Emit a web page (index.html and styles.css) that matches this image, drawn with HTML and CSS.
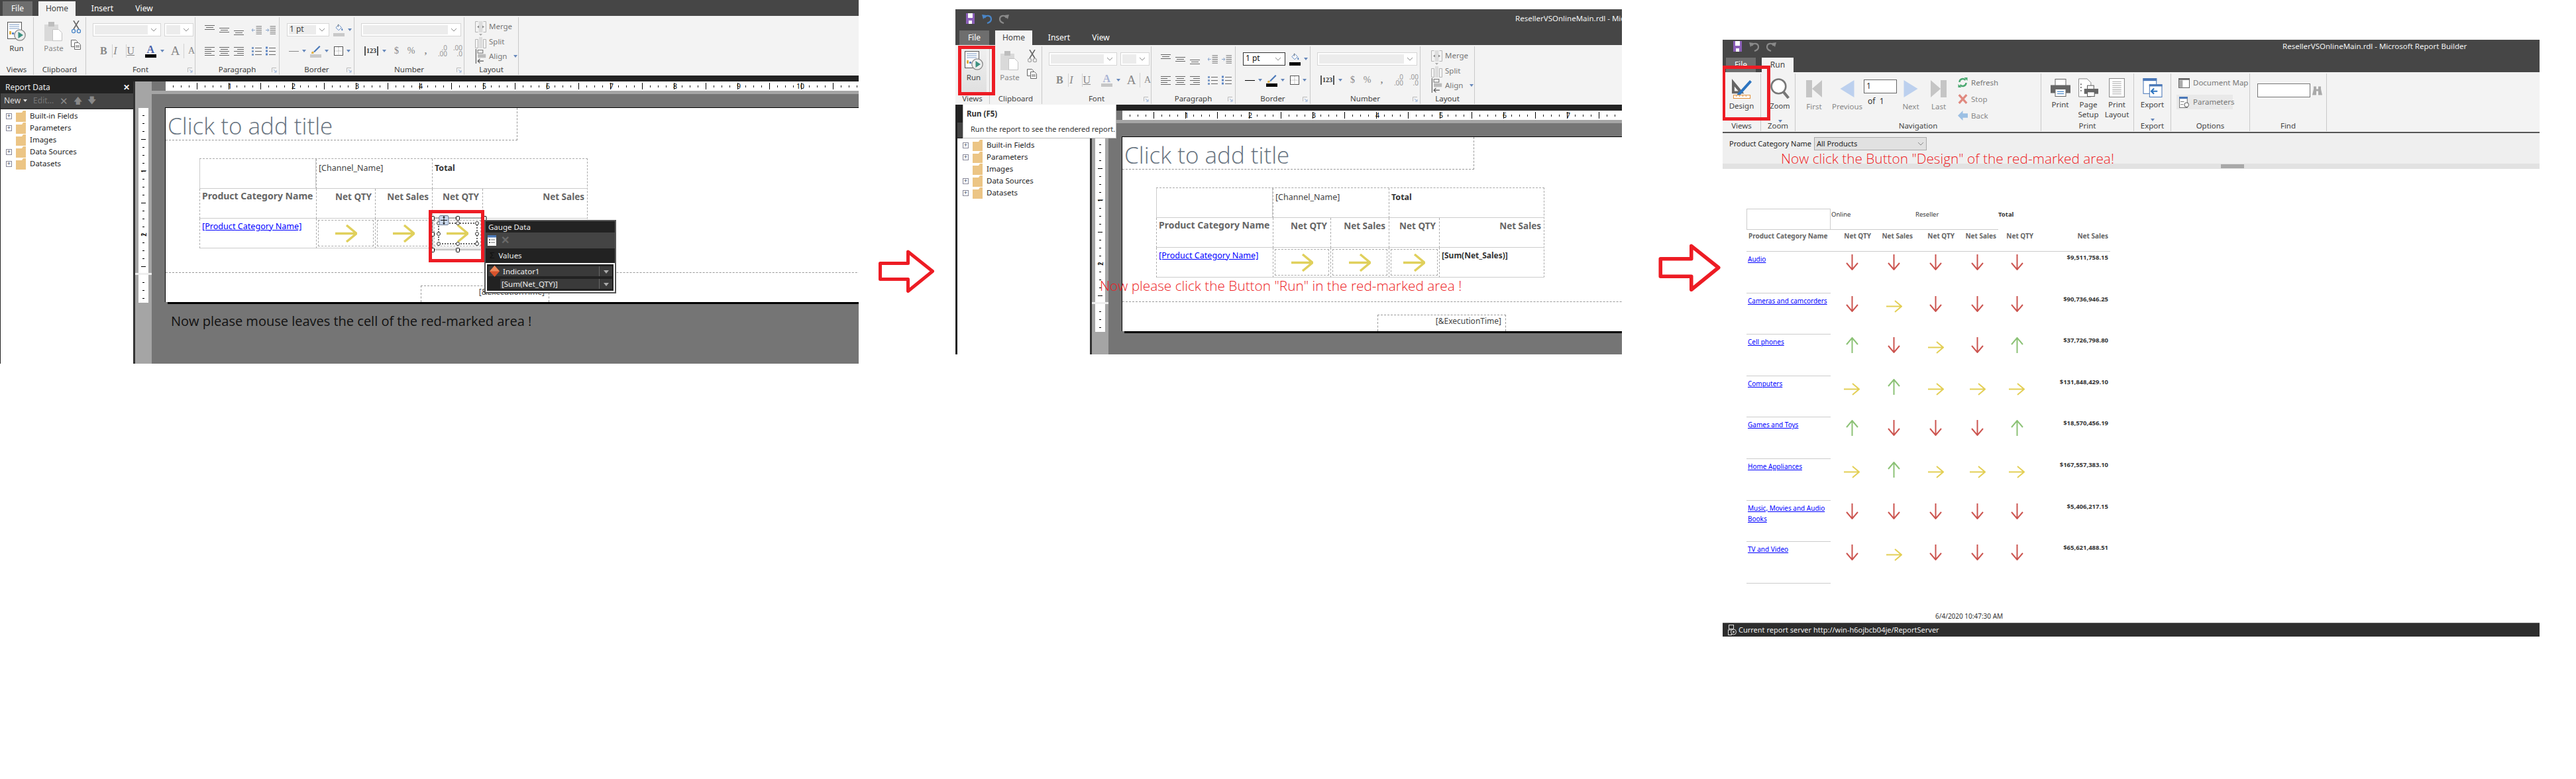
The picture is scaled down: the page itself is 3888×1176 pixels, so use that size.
FILE: index.html
```html
<!DOCTYPE html>
<html lang="en">
<head>
<meta charset="utf-8">
<title>Report Builder walkthrough</title>
<link rel="stylesheet" href="styles.css">
</head>
<body>
<svg class="sprite" aria-hidden="true">
  <symbol id="run" viewBox="0 0 28 29"><rect x=".5" y=".5" width="21" height="25" fill="#fff" stroke="#555"/><path d="M3 4h15M3 7h15M3 10h15" stroke="#7d9cc8"/><path d="M3 14h3v5H3z" fill="#e0b040"/><path d="M7 16h3v3H7z" fill="#5b84c4"/><circle cx="19" cy="20" r="8.2" fill="#eee" stroke="#888" stroke-width="1.3"/><path d="M16.5 15l7.5 5-7.5 5z" fill="#3c9080"/></symbol>
  <symbol id="paste" viewBox="0 0 28 29"><rect x="0" y="4" width="21" height="25" fill="#d9d9d9"/><rect x="6" y="0" width="9" height="7" fill="#bdbdbd"/><path d="M12.5 11.5h9l5 5v12h-14z" fill="#fff" stroke="#c4c4c4"/></symbol>
  <symbol id="cut" viewBox="0 0 14 20"><path d="M3 0l8 13M11 0L3 13" stroke="#666" stroke-width="1.6" fill="none"/><circle cx="3" cy="16" r="2.6" fill="none" stroke="currentColor" stroke-width="1.4"/><circle cx="11" cy="16" r="2.6" fill="none" stroke="currentColor" stroke-width="1.4"/></symbol>
  <symbol id="copy" viewBox="0 0 15 15"><path d="M.5.5h7l2 2v8H.5z" fill="#fff" stroke="currentColor"/><path d="M5.5 4.5h6l3 3v7h-9z" fill="#fff" stroke="currentColor"/><path d="M7 9h6M7 11h6" stroke="currentColor"/></symbol>
  <symbol id="al-top" viewBox="0 0 15 15"><path d="M0 .5h15M2 3.5h11M0 6.5h15" stroke="#666"/></symbol>
  <symbol id="al-mid" viewBox="0 0 15 15"><path d="M0 4.5h15M2 7.5h11M0 10.5h15" stroke="#666"/></symbol>
  <symbol id="al-bot" viewBox="0 0 15 15"><path d="M0 8.5h15M2 11.5h11M0 14.5h15" stroke="#666"/></symbol>
  <symbol id="ind-l" viewBox="0 0 16 15"><path d="M7 1.500h9M7 4.500h9M7 7.500h9M7 10.500h9M7 13.500h9" stroke="#666"/><path d="M5 7.500H0m2-2.500L0 7.500 2 10" stroke="#7d9cc8" fill="none"/></symbol>
  <symbol id="ind-r" viewBox="0 0 16 15"><path d="M7 1.500h9M7 4.500h9M7 7.500h9M7 10.500h9M7 13.500h9" stroke="#666"/><path d="M0 7.500h5m-2-2.500 2 2.500L3 10" stroke="#7d9cc8" fill="none"/></symbol>
  <symbol id="tx-l" viewBox="0 0 15 15"><path d="M0 1.500h15M0 4.500h10M0 7.500h15M0 10.500h10M0 13.500h15" stroke="#666"/></symbol>
  <symbol id="tx-c" viewBox="0 0 15 15"><path d="M0 1.500h15M2 4.500h11M0 7.500h15M2 10.500h11M0 13.500h15" stroke="#666"/></symbol>
  <symbol id="tx-r" viewBox="0 0 15 15"><path d="M0 1.500h15M5 4.500h10M0 7.500h15M5 10.500h10M0 13.500h15" stroke="#666"/></symbol>
  <symbol id="bul" viewBox="0 0 15 15"><path d="M5 2.500h10M5 7.500h10M5 12.500h10" stroke="#666"/><path d="M0 1h3v3H0zM0 6h3v3H0zM0 11h3v3H0z" fill="#7d9cc8"/></symbol>
  <symbol id="num" viewBox="0 0 15 15"><path d="M5 2.500h10M5 7.500h10M5 12.500h10" stroke="#666"/><path d="M0 .5h3v3H0zM0 5.500h3v3H0zM0 10.500h3v3H0z" fill="#5b84c4"/></symbol>
  <symbol id="fill" viewBox="0 0 19 20"><path d="M3 8l6-6 6 6-6 6z" fill="#fff" stroke="#4a78b8" stroke-width="1.300"/><path d="M8 1v6" stroke="#444"/><path d="M16 9c1 2 2 3 2 4a1.500 1.500 0 0 1-3 0c0-1 0-2 1-4z" fill="#4a78b8"/></symbol>
  <symbol id="pen" viewBox="0 0 16 14"><path d="M5 10L14 1l1.500 1.500L7 11z" fill="#4a78b8"/><path d="M2 13c0-3 1-4 3-3 1 1 1 2 0 3z" fill="#e0b040"/></symbol>
  <symbol id="bdr" viewBox="0 0 14 14"><rect x=".5" y=".5" width="13" height="13" fill="#fff" stroke="#555"/><path d="M7 1v12M1 7h12" stroke="#999" stroke-dasharray="1 1"/></symbol>
  <symbol id="merge" viewBox="0 0 17 17"><path d="M4.500.5h-4v16h4M12.500.5h4v16h-4" fill="none" stroke="#b5b5b5"/><rect x="5.500" y="0" width="6" height="17" fill="#ddd"/><path d="M3 8.500l3-2v4zM14 8.500l-3-2v4z" fill="#888"/></symbol>
  <symbol id="split" viewBox="0 0 17 22"><path d="M.5 8.500h4v13h-4zM12.500 8.500h4v13h-4z" fill="none" stroke="#b5b5b5"/><rect x="6" y="5" width="5" height="17" fill="#ddd"/><path d="M6 0h5L8.500 3z" fill="#aaa"/></symbol>
  <symbol id="align" viewBox="0 0 14 20"><path d="M.5 0v20" stroke="#555"/><rect x="3" y="1.500" width="7" height="4" fill="#fff" stroke="#777"/><rect x="3" y="7" width="11" height="5" fill="#bbb"/><path d="M11 16.500H3m3-3l-3 3 3 3" fill="none" stroke="#555"/></symbol>
  <symbol id="launch" viewBox="0 0 8 8"><path d="M.5 7V.5H7" fill="none" stroke="#bbb"/><path d="M3 3l4 4M7 4v3H4" fill="none" stroke="#8eacd8"/></symbol>
  <symbol id="chev" viewBox="0 0 10 6"><path d="M1 1l4 4 4-4" fill="none" stroke="#8a8a8a"/></symbol>
  <symbol id="folder" viewBox="0 0 15 17"><path d="M0 3h9l2-3h4v17H0z" fill="#ecc585"/></symbol>
  <symbol id="gem" viewBox="0 0 15 17"><path d="M7.500 0L15 8.500 7.500 17 0 8.500z" fill="#d9532c"/><path d="M7.500 0L0 8.500h15z" fill="#ee8a5c"/></symbol>
  <symbol id="tbl" viewBox="0 0 13 16"><rect width="13" height="16" fill="#fff"/><rect width="13" height="3.500" fill="#4a78b8"/><path d="M5 7h6M5 11h6" stroke="#666"/><path d="M2 6h2v2H2zM2 10h2v2H2z" fill="#666"/></symbol>
  <symbol id="ar-r" viewBox="0 0 33 27"><path d="M0 13.500h31M17 1l15 12.500L17 26" fill="none" stroke="#e0d05c" stroke-width="3.400"/></symbol>
  <symbol id="rp-r" viewBox="0 0 24 19"><path d="M0 9.500h22M13 1l10 8.500L13 18" fill="none" stroke="#e3cf55" stroke-width="2"/></symbol>
  <symbol id="rp-d" viewBox="0 0 19 24"><path d="M9.500 0v22M1 13l8.500 10L18 13" fill="none" stroke="#cc5550" stroke-width="2"/></symbol>
  <symbol id="rp-u" viewBox="0 0 19 24"><path d="M9.500 24V2M1 11l8.500-10L18 11" fill="none" stroke="#8cc276" stroke-width="2"/></symbol>
  <symbol id="big" viewBox="0 0 84 65"><path d="M2.500 20.500h42V3l37 29.500-37 30V44.500h-42z" fill="#fff" stroke="#ed1c24" stroke-width="5" stroke-linejoin="round"/></symbol>
  <symbol id="design" viewBox="0 0 32 32"><path fill-rule="evenodd" d="M1 1l19 23H1zM5 13v7h6z" fill="#666"/><path d="M10 24L29 3l3 3-18 20-6 2z" fill="#2c74c0"/><rect x="3.500" y="26.500" width="26" height="5" fill="#fff" stroke="#e08a30"/><path d="M8 27v2M13 27v2M18 27v2M23 27v2" stroke="#e08a30"/></symbol>
  <symbol id="zoom" viewBox="0 0 28 30"><circle cx="12" cy="12" r="10.500" fill="#fff" stroke="#777" stroke-width="2.500"/><path d="M19 20l7.500 9" stroke="#777" stroke-width="4"/></symbol>
  <symbol id="first" viewBox="0 0 24 26"><rect width="9" height="26" fill="#c5c5c5"/><path d="M24 0v26L9 13z" fill="#c5c5c5"/></symbol>
  <symbol id="last" viewBox="0 0 24 26"><rect x="15" width="9" height="26" fill="#c5c5c5"/><path d="M0 0v26l15-13z" fill="#c5c5c5"/></symbol>
  <symbol id="prev" viewBox="0 0 21 26"><path d="M21 0v26L0 13z" fill="#bcd0ee"/></symbol>
  <symbol id="next" viewBox="0 0 21 26"><path d="M0 0v26l21-13z" fill="#bcd0ee"/></symbol>
  <symbol id="refresh" viewBox="0 0 14 15"><path d="M2 7a5 5 0 0 1 9-3" fill="none" stroke="#4aa870" stroke-width="2.400"/><path d="M12 8a5 5 0 0 1-9 3" fill="none" stroke="#4aa870" stroke-width="2.400"/><path d="M9 0h5v5zM5 15H0v-5z" fill="#4aa870"/></symbol>
  <symbol id="stop" viewBox="0 0 12 13"><path d="M1 1l10 11M11 1L1 12" stroke="#e08a80" stroke-width="2.800"/></symbol>
  <symbol id="back" viewBox="0 0 14 14"><path d="M0 7l7-7v4h7v6H7v4z" fill="#9cc0e4"/></symbol>
  <symbol id="print" viewBox="0 0 30 26"><rect x="7" y="0" width="16" height="10" fill="#fff" stroke="#666"/><rect y="9" width="30" height="12" fill="#666"/><rect x="7" y="15" width="16" height="11" fill="#fff" stroke="#666"/><path d="M10 19h10M10 22h10" stroke="#2c74c0"/></symbol>
  <symbol id="psetup" viewBox="0 0 31 29"><path d="M.5.5h13l6 6v22H.5z" fill="#fff" stroke="#888"/><path d="M3 9h2M3 14h2M3 19h2" stroke="#777" stroke-width="2"/><rect x="14" y="11" width="10" height="6" fill="#fff" stroke="#555"/><rect x="9" y="16" width="22" height="8" fill="#666"/><rect x="14" y="21" width="11" height="7" fill="#fff" stroke="#555"/></symbol>
  <symbol id="playout" viewBox="0 0 23 28"><rect x=".5" y=".5" width="22" height="27" fill="#fff" stroke="#888"/><path d="M5 5h13M5 8h13M5 11h13M5 14h13M5 17h13M5 20h13M5 23h13" stroke="#aaa"/></symbol>
  <symbol id="export" viewBox="0 0 28 28"><rect x=".5" y=".5" width="19" height="22" fill="#fff" stroke="#4a78b8"/><rect width="20" height="4" fill="#4a78b8"/><rect x="9.500" y="9.500" width="18" height="18" fill="#fff" stroke="#4a78b8"/><rect x="9" y="9" width="19" height="3" fill="#4a78b8"/><path d="M21 19h-8m3-4l-4 4 4 4" fill="none" stroke="#2c74c0" stroke-width="2"/></symbol>
  <symbol id="docmap" viewBox="0 0 16 14"><rect x=".5" y=".5" width="15" height="13" fill="#fff" stroke="#666"/><rect width="16" height="2.500" fill="#666"/><rect x="1" y="3" width="5" height="10" fill="#aaa"/></symbol>
  <symbol id="params" viewBox="0 0 14 16"><rect x=".5" y=".5" width="11" height="15" fill="#fff" stroke="#777"/><rect width="12" height="3" fill="#4a78b8"/><path d="M2 7h5M2 11h4" stroke="#777"/><circle cx="10.500" cy="11.500" r="3" fill="#fff" stroke="#666"/></symbol>
  <symbol id="binoc" viewBox="0 0 15 14"><path d="M2 1h4v4h3V1h4v4l2 9H9V8H6v6H0l2-9z" fill="#aaa"/></symbol>
  <symbol id="srv" viewBox="0 0 13 16"><rect x="1.500" y=".5" width="7" height="6" fill="none" stroke="#ddd"/><rect x=".5" y="8" width="5" height="7.500" fill="none" stroke="#ddd"/><circle cx="8.500" cy="11" r="4" fill="#2d2d2d" stroke="#ddd"/><path d="M7.500 9l3 2-3 2z" fill="#ddd"/></symbol>
  <symbol id="s-save" viewBox="0 0 13 16"><rect width="13" height="16" fill="#8b5fb8"/><rect x="3" y="0" width="7" height="7" fill="#fff"/><rect x="4" y="11" width="5" height="5" fill="#fff"/></symbol>
  <symbol id="s-undo" viewBox="0 0 15 16"><path d="M4 7C6 2 14 3 14 9c0 3-3 5-6 6" fill="none" stroke="currentColor" stroke-width="2.200"/><path d="M0 2l7 1-5 6z" fill="currentColor"/></symbol>
  <symbol id="s-redo" viewBox="0 0 15 16"><path d="M11 7C9 2 1 3 1 9c0 3 3 5 6 6" fill="none" stroke="currentColor" stroke-width="2.200"/><path d="M15 2L8 3l5 6z" fill="currentColor"/></symbol>
</svg>

<!-- ============ WINDOW 1 ============ -->
<section class="win w1">
  <nav class="tabs"><span class="tab file">File</span><span class="tab active">Home</span><span class="tab">Insert</span><span class="tab">View</span></nav>
  <div class="ribbon">
    <div class="group g-views"><div class="g-body"><div class="bigbtn"><svg class="ic28"><use href="#run"/></svg><span>Run</span></div></div><div class="g-label">Views</div></div>
    <div class="group g-clip"><div class="g-body clip"><div class="bigbtn dim"><svg class="ic28"><use href="#paste"/></svg><span>Paste</span></div><div class="clip-side blue"><svg class="ic-cut"><use href="#cut"/></svg><svg class="ic15"><use href="#copy"/></svg></div></div><div class="g-label">Clipboard</div></div>
    <div class="group g-font"><div class="g-body rows"><div class="row"><span class="combo c-font"><i></i><svg class="chev"><use href="#chev"/></svg></span><span class="combo c-size"><i></i><svg class="chev"><use href="#chev"/></svg></span></div><div class="row row2 fmt"><b class="fb">B</b><em class="fi">I</em><u class="fu">U</u><span class="fa"><span>A</span><i></i></span><span class="dd"></span><span class="fg">A</span><span class="fs">A</span></div></div><div class="g-label">Font</div><svg class="launch"><use href="#launch"/></svg></div>
    <div class="group g-para"><div class="g-body rows"><div class="row icons"><svg class="ic15"><use href="#al-top"/></svg><svg class="ic15"><use href="#al-mid"/></svg><svg class="ic15"><use href="#al-bot"/></svg><svg class="ic15 gap"><use href="#ind-l"/></svg><svg class="ic15"><use href="#ind-r"/></svg></div><div class="row row2 icons"><svg class="ic15"><use href="#tx-l"/></svg><svg class="ic15"><use href="#tx-c"/></svg><svg class="ic15"><use href="#tx-r"/></svg><svg class="ic15 gap"><use href="#bul"/></svg><svg class="ic15"><use href="#num"/></svg></div></div><div class="g-label">Paragraph</div><svg class="launch"><use href="#launch"/></svg></div>
    <div class="group g-border"><div class="g-body rows"><div class="row"><span class="combo c-pt"><span class="pt">1 pt</span><i></i><svg class="chev"><use href="#chev"/></svg></span><span class="swatch"><svg class="ic-fill"><use href="#fill"/></svg><i></i></span><span class="dd"></span></div><div class="row row2 bd-tools"><span class="bd-line"></span><span class="dd"></span><span class="swatch pen"><svg class="ic-pen"><use href="#pen"/></svg><i></i></span><span class="dd"></span><svg class="ic14"><use href="#bdr"/></svg><span class="dd"></span></div></div><div class="g-label">Border</div><svg class="launch"><use href="#launch"/></svg></div>
    <div class="group g-num"><div class="g-body rows"><div class="row"><span class="combo c-num"><i></i><svg class="chev"><use href="#chev"/></svg></span></div><div class="row row2 num-tools"><span class="n123">123</span><span class="dd"></span><span class="nsym">$</span><span class="nsym pc">%</span><span class="nsym cm">,</span><span class="ndec">.0<br>.00</span><span class="ndec">.00<br>.0</span></div></div><div class="g-label">Number</div><svg class="launch"><use href="#launch"/></svg></div>
    <div class="group g-layout"><div class="g-body lay"><div class="lay-row"><svg class="ic17"><use href="#merge"/></svg><span>Merge</span></div><div class="lay-row"><svg class="ic17 tall"><use href="#split"/></svg><span>Split</span></div><div class="lay-row"><svg class="ic17 tall"><use href="#align"/></svg><span>Align</span><span class="dd"></span></div></div><div class="g-label">Layout</div></div>
  </div>
  <div class="blackbar"></div>
  <div class="work">
    <aside class="pane">
      <div class="pane-title"><span>Report Data</span><span class="pane-x">✕</span></div>
      <div class="pane-tools"><span class="pt-new">New</span><span class="dd wht"></span><span class="pt-edit">Edit...</span><span class="pt-x">✕</span><span class="pt-up">🡅</span><span class="pt-up">🡇</span></div>
      <ul class="tree">
        <li><span class="exp">+</span><svg class="folder"><use href="#folder"/></svg>Built-in Fields</li>
        <li><span class="exp">+</span><svg class="folder"><use href="#folder"/></svg>Parameters</li>
        <li><span class="exp none"></span><svg class="folder"><use href="#folder"/></svg>Images</li>
        <li><span class="exp">+</span><svg class="folder"><use href="#folder"/></svg>Data Sources</li>
        <li><span class="exp">+</span><svg class="folder"><use href="#folder"/></svg>Datasets</li>
      </ul>
    </aside>
    <div class="vcol">
      <div class="vruler top"><span>1</span><span>2</span></div>
      <div class="vsplit"></div>
      <div class="vruler bot"></div>
    </div>
    <main class="design">
      <div class="hruler"><span>1</span><span>2</span><span>3</span><span>4</span><span>5</span><span>6</span><span>7</span><span>8</span><span>9</span><span>10</span></div>
      <div class="hstrip"></div>
      <div class="canvas">
        <div class="page">
          <div class="page-body">
            <div class="title-box">Click to add title</div>
            <div class="tablix">
              <div class="cell solid"></div><div class="cell span2">[Channel_Name]</div><div class="cell span2 bold">Total</div>
              <div class="cell hd left">Product Category Name</div><div class="cell hd">Net QTY</div><div class="cell hd">Net Sales</div><div class="cell hd">Net QTY</div><div class="cell hd">Net Sales</div>
              <div class="cell link"><a href="#">[Product Category Name]</a></div>
              <div class="cell"><div class="gauge"><svg class="ar"><use href="#ar-r"/></svg></div></div>
              <div class="cell"><div class="gauge"><svg class="ar"><use href="#ar-r"/></svg></div></div>
              <div class="cell"><div class="gauge"><svg class="ar"><use href="#ar-r"/></svg></div></div>
              <div class="cell"></div>
            </div>
          </div>
          <div class="page-foot"><div class="exec">[&amp;ExecutionTime]</div></div>
        </div>
        <p class="note dark">Now please mouse leaves the cell of the red-marked area !</p>
      </div>
    </main>
  </div>
  <svg class="select-frame" viewBox="0 0 96 90">
    <g fill="none" stroke="#000" stroke-dasharray="1 1"><rect x="8" y="12" width="78" height="48"/></g>
    <g fill="none" stroke="#333" stroke-dasharray="2 2" stroke-width="1.500"><rect x="17" y="20" width="58" height="31"/></g>
    <g fill="#fff" stroke="#000"><rect x="5.500" y="9.500" width="5" height="6" rx="1"/><rect x="43.500" y="9.500" width="5" height="6" rx="1"/><rect x="84" y="9.500" width="5" height="6" rx="1"/><rect x="5.500" y="33.500" width="5" height="6" rx="1"/><rect x="5.500" y="57.500" width="5" height="6" rx="1"/><rect x="43.500" y="57.500" width="5" height="6" rx="1"/></g>
    <g fill="#fff" stroke="#333"><circle cx="17" cy="20" r="2.500"/><circle cx="46" cy="20" r="2.500"/><circle cx="75" cy="20" r="2.500"/><circle cx="17" cy="36" r="2.500"/><circle cx="75" cy="36" r="2.500"/><circle cx="17" cy="51" r="2.500"/><circle cx="46" cy="51" r="2.500"/><circle cx="75" cy="51" r="2.500"/></g>
    <rect x="18" y="8.500" width="14" height="14" rx="2" fill="#c9d8ee" stroke="#6b7a90"/><path d="M25 10v11M20 15.500h10" stroke="#111"/><path d="M25 9l-2 2.500h4zM25 22l-2-2.500h4z" fill="#111"/>
    <rect x="4.500" y="2.500" width="79" height="74" fill="none" stroke="#ed1c24" stroke-width="5"/>
  </svg>
  <div class="popup">
    <div class="pop-title">Gauge Data</div>
    <div class="pop-tools"><svg class="ic-tbl"><use href="#tbl"/></svg><span class="pop-x">✕</span></div>
    <div class="pop-sum"><span class="sig">Σ</span>Values</div>
    <div class="pop-list">
      <div class="pop-row"><svg class="gem"><use href="#gem"/></svg><span class="pr-t">Indicator1</span><span class="pr-dd"></span></div>
      <div class="pop-row sub"><span class="pr-t">[Sum(Net_QTY)]</span><span class="pr-dd"></span></div>
    </div>
  </div>
</section>

<svg class="bigarrow a1"><use href="#big"/></svg>

<!-- ============ WINDOW 2 ============ -->
<section class="win w2">
  <div class="qat"><svg class="q-save"><use href="#s-save"/></svg><svg class="q-ic blue"><use href="#s-undo"/></svg><svg class="q-ic gray"><use href="#s-redo"/></svg><span class="wintitle">ResellerVSOnlineMain.rdl - Microsoft Report Builder</span></div>
  <nav class="tabs"><span class="tab file">File</span><span class="tab active">Home</span><span class="tab">Insert</span><span class="tab">View</span></nav>
  <div class="ribbon">
    <div class="group g-views"><div class="g-body"><div class="bigbtn hot"><svg class="ic28"><use href="#run"/></svg><span>Run</span></div></div><div class="g-label">Views</div></div>
    <div class="group g-clip"><div class="g-body clip"><div class="bigbtn dim"><svg class="ic28"><use href="#paste"/></svg><span>Paste</span></div><div class="clip-side"><svg class="ic-cut"><use href="#cut"/></svg><svg class="ic15"><use href="#copy"/></svg></div></div><div class="g-label">Clipboard</div></div>
    <div class="group g-font"><div class="g-body rows"><div class="row"><span class="combo c-font"><i></i><svg class="chev"><use href="#chev"/></svg></span><span class="combo c-size"><i></i><svg class="chev"><use href="#chev"/></svg></span></div><div class="row row2 fmt"><b class="fb">B</b><em class="fi">I</em><u class="fu">U</u><span class="fa"><span>A</span><i></i></span><span class="dd"></span><span class="fg">A</span><span class="fs">A</span></div></div><div class="g-label">Font</div><svg class="launch"><use href="#launch"/></svg></div>
    <div class="group g-para"><div class="g-body rows"><div class="row icons"><svg class="ic15"><use href="#al-top"/></svg><svg class="ic15"><use href="#al-mid"/></svg><svg class="ic15"><use href="#al-bot"/></svg><svg class="ic15 gap"><use href="#ind-l"/></svg><svg class="ic15"><use href="#ind-r"/></svg></div><div class="row row2 icons"><svg class="ic15"><use href="#tx-l"/></svg><svg class="ic15"><use href="#tx-c"/></svg><svg class="ic15"><use href="#tx-r"/></svg><svg class="ic15 gap"><use href="#bul"/></svg><svg class="ic15"><use href="#num"/></svg></div></div><div class="g-label">Paragraph</div><svg class="launch"><use href="#launch"/></svg></div>
    <div class="group g-border"><div class="g-body rows"><div class="row"><span class="combo c-pt"><span class="pt">1 pt</span><svg class="chev"><use href="#chev"/></svg></span><span class="swatch"><svg class="ic-fill"><use href="#fill"/></svg><i></i></span><span class="dd"></span></div><div class="row row2 bd-tools"><span class="bd-line"></span><span class="dd"></span><span class="swatch pen"><svg class="ic-pen"><use href="#pen"/></svg><i></i></span><span class="dd"></span><svg class="ic14"><use href="#bdr"/></svg><span class="dd"></span></div></div><div class="g-label">Border</div><svg class="launch"><use href="#launch"/></svg></div>
    <div class="group g-num"><div class="g-body rows"><div class="row"><span class="combo c-num"><i></i><svg class="chev"><use href="#chev"/></svg></span></div><div class="row row2 num-tools"><span class="n123">123</span><span class="dd"></span><span class="nsym">$</span><span class="nsym pc">%</span><span class="nsym cm">,</span><span class="ndec">.0<br>.00</span><span class="ndec">.00<br>.0</span></div></div><div class="g-label">Number</div><svg class="launch"><use href="#launch"/></svg></div>
    <div class="group g-layout"><div class="g-body lay"><div class="lay-row"><svg class="ic17"><use href="#merge"/></svg><span>Merge</span></div><div class="lay-row"><svg class="ic17 tall"><use href="#split"/></svg><span>Split</span></div><div class="lay-row"><svg class="ic17 tall"><use href="#align"/></svg><span>Align</span><span class="dd"></span></div></div><div class="g-label">Layout</div></div>
  </div>
  <div class="blackbar"></div>
  <div class="work">
    <aside class="pane">
      <div class="pane-title"></div>
      <div class="pane-tools"></div>
      <ul class="tree">
        <li><span class="exp">+</span><svg class="folder"><use href="#folder"/></svg>Built-in Fields</li>
        <li><span class="exp">+</span><svg class="folder"><use href="#folder"/></svg>Parameters</li>
        <li><span class="exp none"></span><svg class="folder"><use href="#folder"/></svg>Images</li>
        <li><span class="exp">+</span><svg class="folder"><use href="#folder"/></svg>Data Sources</li>
        <li><span class="exp">+</span><svg class="folder"><use href="#folder"/></svg>Datasets</li>
      </ul>
    </aside>
    <div class="vcol">
      <div class="vruler top"><span>1</span><span>2</span></div>
      <div class="vsplit"></div>
      <div class="vruler bot"></div>
    </div>
    <main class="design">
      <div class="hruler"><span>1</span><span>2</span><span>3</span><span>4</span><span>5</span><span>6</span><span>7</span></div>
      <div class="hstrip"></div>
      <div class="canvas">
        <div class="page">
          <div class="page-body">
            <div class="title-box">Click to add title</div>
            <div class="tablix">
              <div class="cell solid"></div><div class="cell span2">[Channel_Name]</div><div class="cell span2 bold">Total</div>
              <div class="cell hd left">Product Category Name</div><div class="cell hd">Net QTY</div><div class="cell hd">Net Sales</div><div class="cell hd">Net QTY</div><div class="cell hd">Net Sales</div>
              <div class="cell link"><a href="#">[Product Category Name]</a></div>
              <div class="cell"><div class="gauge"><svg class="ar"><use href="#ar-r"/></svg></div></div>
              <div class="cell"><div class="gauge"><svg class="ar"><use href="#ar-r"/></svg></div></div>
              <div class="cell"><div class="gauge"><svg class="ar"><use href="#ar-r"/></svg></div></div>
              <div class="cell bold">[Sum(Net_Sales)]</div>
            </div>
          </div>
          <div class="page-foot"><div class="exec">[&amp;ExecutionTime]</div></div>
        </div>
      </div>
    </main>
  </div>
  <div class="tooltip"><b>Run (F5)</b><p>Run the report to see the rendered report.</p></div>
  <p class="note red r2">Now please click the Button "Run" in the red-marked area !</p>
  <div class="redbox rb2"></div>
</section>

<svg class="bigarrow a2"><use href="#big"/></svg>

<!-- ============ WINDOW 3 ============ -->
<section class="win w3">
  <div class="qat"><svg class="q-save"><use href="#s-save"/></svg><svg class="q-ic gray"><use href="#s-undo"/></svg><svg class="q-ic gray"><use href="#s-redo"/></svg><span class="wintitle">ResellerVSOnlineMain.rdl - Microsoft Report Builder</span></div>
  <nav class="tabs"><span class="tab file">File</span><span class="tab active">Run</span></nav>
  <div class="ribbon">
    <div class="group g3-views"><div class="g-body"><div class="bigbtn"><svg class="ic-design"><use href="#design"/></svg><span>Design</span></div></div><div class="g-label">Views</div></div>
    <div class="group g3-zoom"><div class="g-body"><div class="bigbtn"><svg class="ic-design"><use href="#zoom"/></svg><span>Zoom</span><span class="dd sub"></span></div></div><div class="g-label">Zoom</div></div>
    <div class="group g3-nav"><div class="g-body nav">
      <div class="bigbtn dim w56"><svg class="ic-nav"><use href="#first"/></svg><span>First</span></div>
      <div class="bigbtn dim w44"><svg class="ic-nav"><use href="#prev"/></svg><span>Previous</span></div>
      <div class="pageno"><span class="pg-in">1</span><span class="pg-of">of&nbsp; 1</span></div>
      <div class="bigbtn dim w40"><svg class="ic-nav"><use href="#next"/></svg><span>Next</span></div>
      <div class="bigbtn dim w44"><svg class="ic-nav"><use href="#last"/></svg><span>Last</span></div>
      <div class="navside"><div class="sm"><svg class="ic15"><use href="#refresh"/></svg><span>Refresh</span></div><div class="sm dim"><svg class="ic15"><use href="#stop"/></svg><span>Stop</span></div><div class="sm dim"><svg class="ic15"><use href="#back"/></svg><span>Back</span></div></div>
    </div><div class="g-label">Navigation</div></div>
    <div class="group g3-print"><div class="g-body prt">
      <div class="bigbtn w45"><svg class="ic-nav30"><use href="#print"/></svg><span>Print</span></div>
      <div class="bigbtn w40"><svg class="ic-nav30"><use href="#psetup"/></svg><span>Page<br>Setup</span></div>
      <div class="bigbtn w46"><svg class="ic-nav30"><use href="#playout"/></svg><span>Print<br>Layout</span></div>
    </div><div class="g-label">Print</div></div>
    <div class="group g3-export"><div class="g-body"><div class="bigbtn"><svg class="ic-nav30"><use href="#export"/></svg><span>Export</span><span class="dd sub"></span></div></div><div class="g-label">Export</div></div>
    <div class="group g3-opt"><div class="g-body opts"><div class="sm"><svg class="ic17"><use href="#docmap"/></svg><span>Document Map</span></div><div class="sm on"><svg class="ic17"><use href="#params"/></svg><span>Parameters</span></div></div><div class="g-label">Options</div></div>
    <div class="group g3-find"><div class="g-body findb"><span class="find-in"></span><svg class="ic15"><use href="#binoc"/></svg></div><div class="g-label">Find</div></div>
  </div>
  <div class="thinbar"></div>
  <div class="parambar"><span class="p-label">Product Category Name</span><span class="p-select">All Products<svg class="chev"><use href="#chev"/></svg></span></div>
  <div class="pgrip"><span class="grip"></span></div>
  <div class="report">
    <div class="rgrid">
      <div class="r-box"></div><div class="r-h1 s2">Online</div><div class="r-h1 s2">Reseller</div><div class="r-h1 s2 bold nb">Total</div>
      <div class="r-h2 left">Product Category Name</div><div class="r-h2">Net QTY</div><div class="r-h2">Net Sales</div><div class="r-h2">Net QTY</div><div class="r-h2">Net Sales</div><div class="r-h2">Net QTY</div><div class="r-h2">Net Sales</div>

      <div class="r-cat"><a href="#">Audio</a></div><div class="r-a"><svg class="d"><use href="#rp-d"/></svg></div><div class="r-a"><svg class="d"><use href="#rp-d"/></svg></div><div class="r-a"><svg class="d"><use href="#rp-d"/></svg></div><div class="r-a"><svg class="d"><use href="#rp-d"/></svg></div><div class="r-a"><svg class="d"><use href="#rp-d"/></svg></div><div class="r-m">$9,511,758.15</div>
      <div class="r-cat"><a href="#">Cameras and camcorders</a></div><div class="r-a"><svg class="d"><use href="#rp-d"/></svg></div><div class="r-a"><svg class="h"><use href="#rp-r"/></svg></div><div class="r-a"><svg class="d"><use href="#rp-d"/></svg></div><div class="r-a"><svg class="d"><use href="#rp-d"/></svg></div><div class="r-a"><svg class="d"><use href="#rp-d"/></svg></div><div class="r-m">$90,736,946.25</div>
      <div class="r-cat"><a href="#">Cell phones</a></div><div class="r-a"><svg class="d"><use href="#rp-u"/></svg></div><div class="r-a"><svg class="d"><use href="#rp-d"/></svg></div><div class="r-a"><svg class="h"><use href="#rp-r"/></svg></div><div class="r-a"><svg class="d"><use href="#rp-d"/></svg></div><div class="r-a"><svg class="d"><use href="#rp-u"/></svg></div><div class="r-m">$37,726,798.80</div>
      <div class="r-cat"><a href="#">Computers</a></div><div class="r-a"><svg class="h"><use href="#rp-r"/></svg></div><div class="r-a"><svg class="d"><use href="#rp-u"/></svg></div><div class="r-a"><svg class="h"><use href="#rp-r"/></svg></div><div class="r-a"><svg class="h"><use href="#rp-r"/></svg></div><div class="r-a"><svg class="h"><use href="#rp-r"/></svg></div><div class="r-m">$131,848,429.10</div>
      <div class="r-cat"><a href="#">Games and Toys</a></div><div class="r-a"><svg class="d"><use href="#rp-u"/></svg></div><div class="r-a"><svg class="d"><use href="#rp-d"/></svg></div><div class="r-a"><svg class="d"><use href="#rp-d"/></svg></div><div class="r-a"><svg class="d"><use href="#rp-d"/></svg></div><div class="r-a"><svg class="d"><use href="#rp-u"/></svg></div><div class="r-m">$18,570,456.19</div>
      <div class="r-cat"><a href="#">Home Appliances</a></div><div class="r-a"><svg class="h"><use href="#rp-r"/></svg></div><div class="r-a"><svg class="d"><use href="#rp-u"/></svg></div><div class="r-a"><svg class="h"><use href="#rp-r"/></svg></div><div class="r-a"><svg class="h"><use href="#rp-r"/></svg></div><div class="r-a"><svg class="h"><use href="#rp-r"/></svg></div><div class="r-m">$167,557,383.10</div>
      <div class="r-cat"><a href="#">Music, Movies and Audio Books</a></div><div class="r-a"><svg class="d"><use href="#rp-d"/></svg></div><div class="r-a"><svg class="d"><use href="#rp-d"/></svg></div><div class="r-a"><svg class="d"><use href="#rp-d"/></svg></div><div class="r-a"><svg class="d"><use href="#rp-d"/></svg></div><div class="r-a"><svg class="d"><use href="#rp-d"/></svg></div><div class="r-m">$5,406,217.15</div>
      <div class="r-cat"><a href="#">TV and Video</a></div><div class="r-a"><svg class="d"><use href="#rp-d"/></svg></div><div class="r-a"><svg class="h"><use href="#rp-r"/></svg></div><div class="r-a"><svg class="d"><use href="#rp-d"/></svg></div><div class="r-a"><svg class="d"><use href="#rp-d"/></svg></div><div class="r-a"><svg class="d"><use href="#rp-d"/></svg></div><div class="r-m">$65,621,488.51</div>
    </div>
    <div class="r-date">6/4/2020 10:47:30 AM</div>
  </div>
  <footer class="status"><svg class="srv"><use href="#srv"/></svg>Current report server http://win-h6ojbcb04je/ReportServer</footer>
  <p class="note red r3">Now click the Button "Design" of the red-marked area!</p>
  <div class="redbox rb3"></div>
</section>
</body>
</html>
```

FILE: styles.css
```css
* { box-sizing: border-box; }
html, body { margin: 0; padding: 0; background: #fff; }
body { position: relative; width: 3888px; height: 1176px; overflow: hidden; font: 11px/1.2 "Noto Sans", "Liberation Sans", sans-serif; color: #444; }
.sprite { position: absolute; width: 0; height: 0; }
svg { display: block; flex: none; }

/* free canvas: the three screenshots and the arrows between them */
.win { position: absolute; display: flex; flex-direction: column; overflow: hidden; background: #fff; }
.w1 { left: 0; top: 0; width: 1296px; height: 549px; }
.w2 { left: 1442px; top: 14px; width: 1006px; height: 521px; }
.w3 { left: 2600px; top: 60px; width: 1233px; height: 901px; }
.bigarrow { position: absolute; }
.a1 { left: 1326px; top: 377px; width: 84px; height: 65px; }
.a2 { left: 2502px; top: 368px; width: 96px; height: 72px; }

/* title & tabs */
.qat { height: 32px; background: #464646; display: flex; align-items: center; padding: 0 0 4px 16px; gap: 10px; flex: none; }
.w3 .qat { height: 27px; padding: 0 0 7px 16px; }
.q-save { width: 13px; height: 16px; }
.q-ic { width: 15px; height: 16px; margin-left: 1px; }
.q-ic.blue { color: #4a86c8; }
.q-ic.gray { color: #8a8a8a; }
.wintitle { color: #f2f2f2; font-size: 11.500px; white-space: nowrap; margin-left: 754px; }
.tabs { height: 24px; padding: 2px 0 0 4px; background: #464646; display: flex; flex: none; color: #fff; font-size: 12px; }
.w2 .tabs, .w3 .tabs { height: 22px; padding-top: 0; padding-left: 6px; }
.w3 .tabs { padding-left: 5px; }
.tab { width: 63px; text-align: center; line-height: 22px; }
.tab.file { width: 45px; background: #6e6e6e; margin-right: 9px; }
.tab.active { width: 56px; background: #f3f3f3; color: #444; }
.tab.active + .tab { margin-left: 9px; }
.w3 .tab.active { width: 48px; }

/* ribbon */
.ribbon { height: 90px; background: #f3f3f3; display: flex; flex: none; padding-top: 2px; }
.group { position: relative; display: flex; flex-direction: column; height: 87px; border-right: 1px solid #c9c9c9; flex: none; }
.g-views { width: 51px; } .g-clip { width: 79px; } .g-font { width: 165px; } .g-para { width: 127px; }
.g-border { width: 113px; } .g-num { width: 166px; } .g-layout { width: 82px; }
.w2 .g-views { width: 52px; }
.g-body { flex: 1; display: flex; min-height: 0; }
.g-label { height: 17px; text-align: center; font-size: 11.500px; line-height: 17px; color: #444; }
.launch { position: absolute; right: 3px; bottom: 3px; width: 8px; height: 8px; }

.bigbtn { display: flex; flex-direction: column; align-items: center; flex: 1; padding-top: 7px; gap: 3px; text-align: center; color: #444; font-size: 11.500px; line-height: 15px; min-width: 0; }
.bigbtn.dim { color: #888; }
.bigbtn.hot { background: linear-gradient(#f0f0f0, #e0e0e0); margin: 0 4px 0 8px; flex: 1; }
.ic28 { width: 28px; height: 29px; }
.ic15 { width: 15px; height: 15px; }
.ic14 { width: 14px; height: 14px; }
.ic17 { width: 17px; height: 17px; }
.ic17.tall { height: 22px; }
.ic-cut { width: 14px; height: 20px; }
.clip { padding-left: 4px; }
.clip .bigbtn { flex: none; width: 52px; }
.clip-side { display: flex; flex-direction: column; align-items: center; gap: 9px; padding-top: 5px; color: #aaa; }
.clip-side.blue { color: #4a86c8; }
.clip-side .ic15 { color: #666; }

.rows { flex-direction: column; padding: 9px 0 0 10px; }
.row { display: flex; align-items: center; height: 20px; gap: 5px; }
.row2 { margin-top: 11px; height: 22px; }
.combo { display: flex; align-items: center; height: 20px; border: 1px solid #d6d6d6; background: #fff; padding: 2px; gap: 4px; }
.combo i { flex: 1; align-self: stretch; background: #ececec; }
.chev { width: 10px; height: 6px; margin-right: 3px; }
.c-font { width: 103px; } .c-size { width: 44px; } .c-pt { width: 64px; position: relative; } .c-num { width: 151px; }
.pt { position: absolute; left: 3px; top: 1px; font-size: 12px; color: #444; }
.w2 .c-pt { border-color: #333; justify-content: flex-end; }
.w2 .pt { color: #111; }
.dd { width: 0; height: 0; border: 3px solid transparent; border-top: 4px solid #6688bb; border-bottom: 0; flex: none; }
.dd.wht { border-top-color: #ddd; }
.dd.sub { margin-top: 11px; }

.fmt { gap: 0; padding-left: 10px; font-family: "Liberation Serif", serif; font-size: 16px; color: #888; }
.fmt > b, .fmt > em, .fmt > u { width: 22px; text-align: left; padding-left: 1px; border-right: 1px solid #d2d2d2; line-height: 20px; }
.fu { margin-right: 8px; border: 0 !important; text-decoration: underline; }
.fa { display: flex; flex-direction: column; align-items: center; width: 18px; margin-right: 6px; font-weight: bold; color: #4a62a8; line-height: 14px; }
.fa i { display: block; width: 17px; height: 5px; background: #000; }
.w2 .fa { color: #aab4d4; }
.w2 .fa i { background: #c6c6c6; }
.fg { margin-left: 10px; font-size: 19px; width: 22px; border-right: 1px solid #d2d2d2; }
.fs { margin-left: 6px; font-size: 14px; }

.g-para .rows { padding-left: 14px; }
.icons { gap: 7px; }
.gap { margin-left: 5px; }
.g-para .row2 { margin-top: 12px; height: 20px; }
.ic15.gap + .ic15 { margin-left: -1px; }

.g-border .rows { padding-left: 11px; }
.swatch { display: flex; flex-direction: column; width: 18px; align-items: center; }
.ic-fill { width: 19px; height: 14px; }
.swatch i { display: block; width: 17px; height: 5px; background: #c9c9c9; }
.w2 .swatch i { background: #000; }
.ic-pen { width: 16px; height: 14px; }
.bd-line { width: 15px; border-top: 1px solid #888; }
.w2 .bd-line { border-color: #000; }
.bd-tools { padding-left: 3px; }
.bd-tools .ic14 { margin-left: 3px; }
.num-tools { gap: 0; padding-left: 5px; font-size: 14px; color: #888; font-family: "Liberation Serif", serif; }
.n123 { border: 1px solid #555; border-width: 0 2px; padding: 0 1px; font-size: 10px; line-height: 14px; color: #333; margin-right: 6px; font-weight: bold; }
.nsym { width: 21px; text-align: center; margin-left: 5px; }
.nsym.pc { margin-left: 1px; }
.nsym.cm { margin-left: 1px; font-weight: bold; }
.ndec { width: 22px; font-size: 10px; line-height: 9px; text-align: right; color: #999; font-family: "Noto Sans", sans-serif; }
.ndec + .ndec { margin-left: 1px; }
.lay { flex-direction: column; padding: 3px 0 0 16px; color: #777; font-size: 11.500px; }
.lay-row { display: flex; align-items: center; height: 24px; gap: 4px; }
.lay-row .dd { margin-left: 6px; }

/* workspace */
.blackbar { height: 9px; background: #222; flex: none; }
.work { flex: 1; display: flex; min-height: 0; }
.pane { width: 204px; flex: none; display: flex; flex-direction: column; background: #222; border-left: 1px solid #222; border-right: 3px solid #333; }
.w2 .pane { width: 206px; border-left-width: 3px; }
.pane-title { height: 18px; display: flex; justify-content: space-between; align-items: center; padding: 0 5px 0 7px; color: #eee; font-size: 12px; flex: none; }
.pane-x { font-size: 12px; font-weight: bold; color: #fff; }
.pane-tools { height: 24px; display: flex; align-items: center; background: #444; padding-left: 5px; gap: 4px; color: #ddd; font-size: 12px; border-bottom: 2px solid #333; flex: none; }
.pt-edit { color: #777; margin-left: 5px; }
.pt-x { color: #8a8a8a; font-size: 15px; margin-left: 5px; }
.pt-up { color: #888; font-size: 13px; margin-left: 4px; }
.tree { flex: 1; margin: 0; padding: 1px 0 0 8px; list-style: none; background: #fff; font-size: 11.500px; color: #222; }
.tree li { display: flex; align-items: center; height: 18px; gap: 6px; white-space: nowrap; }
.exp { width: 9px; height: 9px; border: 1px solid #889; font: 9px/7px "Liberation Sans", sans-serif; text-align: center; color: #345; }
.exp.none { border: 0; }
.folder { width: 15px; height: 17px; }

.vcol { width: 25px; flex: none; background: #a5a5a5; padding-top: 40px; display: flex; flex-direction: column; }
.vruler { margin: 0 5px; width: 15px; background-color: #fff;
  background-image: repeating-linear-gradient(180deg, transparent 0 11px, #000 11px 12px), repeating-linear-gradient(180deg, transparent 0 47px, #000 47px 48px);
  background-size: 3px 100%, 7px 100%; background-position: center, center; background-repeat: no-repeat; }
.vruler.top { height: 249px; display: flex; flex-direction: column; }
.vruler span { height: 96px; display: flex; align-items: flex-end; justify-content: center; font-size: 10px; line-height: 10px; transform: translateY(4px) rotate(-90deg) ; transform-origin: 50% calc(100% - 5px); color: #000; }
.vsplit { height: 3px; background: #eee; flex: none; }
.vruler.bot { height: 42px; }

.design { flex: 1; min-width: 0; display: flex; flex-direction: column; background: #757575; }
.hruler { height: 14px; margin-left: 21px; padding-left: 4px; background-color: #fff; display: flex; flex: none; font-size: 10.500px; line-height: 14px; color: #000;
  background-image: repeating-linear-gradient(90deg, transparent 0 11px, #000 11px 12px), repeating-linear-gradient(90deg, transparent 0 47px, #000 47px 48px);
  background-size: 100% 3px, 100% 10px; background-position: 0 center, 0 center; background-repeat: no-repeat; }
.hruler span { width: 96px; flex: none; text-align: right; }
.hstrip { height: 5px; background: #a5a5a5; flex: none; }
.canvas { flex: 1; padding: 20px 0 0 20px; overflow: hidden; }
.page { width: 1300px; height: 294px; background: #fff; border: 1px solid #000; border-right: 0; border-bottom: 0; box-shadow: 4px 3px 0 #000; }
.page-body { height: 249px; border-bottom: 1px dashed #999; }
.title-box { width: 531px; height: 49px; border: 1px dashed #999; border-width: 0 1px 1px 0; font: 300 35px/46px "Open Sans", sans-serif; color: #66727e; padding: 4px 0 0 3px; white-space: nowrap; }
.tablix { margin: 27px 0 0 51px; display: grid; grid-template-columns: 176px 89px 86px 76px 159px; grid-auto-rows: 45px; width: 586px; border-top: 1px dashed #aaa; border-right: 1px dashed #aaa; font-size: 11.500px; color: #444; }
.w2 .tablix { grid-template-columns: 176px 87px 88px 76px 159px; }
.cell { border-left: 1px dashed #aaa; border-bottom: 1px solid #ccc; padding: 4px 3px; min-width: 0; }
.cell.solid { border: 1px solid #ccc; border-top: 0; }
.span2 { grid-column: span 2; padding-top: 6px; font-size: 12.500px; }
.bold { font-weight: bold; color: #333; }
.cell.hd { font-weight: bold; text-align: right; font-size: 13.500px; color: #666; padding: 4px 5px; white-space: nowrap; }
.cell.hd.left { text-align: left; font-size: 14px; padding: 3px 3px; }
.cell:nth-child(n+9) { padding: 2px; }
.cell.link:nth-child(n+9) { padding: 4px 3px; font-size: 12.600px; white-space: nowrap; }
.cell.link a { color: #00f; }
.cell.bold:last-child { padding: 5px 3px; font-size: 12px; white-space: nowrap; }
.gauge { height: 100%; border: 1px dashed #aaa; display: flex; align-items: center; justify-content: center; }
.ar { width: 33px; height: 27px; }
.page-foot { height: 44px; padding: 19px 0 0 385px; }
.exec { width: 194px; height: 25px; border: 1px dashed #999; border-bottom: 0; text-align: right; padding: 2px 6px 0 0; font-size: 12px; color: #444; }

/* captions lying over the screenshots */
.note { margin: 0; white-space: nowrap; font-family: "Open Sans", sans-serif; font-weight: 300; line-height: 1; }
.note.dark { margin: 19px 0 0 9px; font-size: 20px; font-weight: 400; color: #111; }
.note.red { position: absolute; color: #ed1c24; font-size: 20.800px; }
.r2 { left: 218px; top: 407px; }
.r3 { left: 88px; top: 169px; }
.redbox { position: absolute; border: 5px solid #ed1c24; }
.rb2 { left: 4px; top: 55px; width: 56px; height: 75px; }
.rb3 { left: -1px; top: 39px; width: 73px; height: 83px; }
.select-frame { position: absolute; left: 645px; top: 317px; width: 96px; height: 90px; }

/* gauge data popup */
.popup { position: absolute; left: 731px; top: 332px; width: 199px; height: 111px; background: #222; border: 2px solid #555; color: #eee; font-size: 11.500px; display: flex; flex-direction: column; }
.pop-title { height: 17px; padding-left: 4px; line-height: 17px; flex: none; }
.pop-tools { height: 24px; background: #444; display: flex; align-items: center; padding-left: 3px; gap: 7px; flex: none; }
.ic-tbl { width: 13px; height: 16px; }
.pop-x { color: #6a6a6a; font-size: 16px; font-weight: bold; }
.pop-sum { height: 22px; padding-left: 6px; display: flex; align-items: center; gap: 6px; flex: none; }
.sig { color: #111; font-size: 13px; }
.pop-list { flex: 1; background: #222; border: 2px solid #fff; padding: 2px 1px; display: flex; flex-direction: column; gap: 2px; }
.pop-row { height: 17px; background: #3a3a3a; border: 1px solid #222; display: flex; align-items: center; padding-left: 2px; gap: 5px; white-space: nowrap; }
.pop-row.sub { margin-left: 18px; }
.gem { width: 15px; height: 17px; }
.pr-t { flex: 1; }
.pr-dd { width: 20px; height: 100%; border-left: 1px solid #666; position: relative; }
.pr-dd::after { content: ""; position: absolute; left: 6px; top: 6px; border: 4px solid transparent; border-top: 5px solid #aaa; border-bottom: 0; }

/* tooltip */
.tooltip { position: absolute; left: 11px; top: 144px; width: 232px; height: 51px; background: #fff; border: 1px solid #bbb; border-top: 0; padding: 7px 5px; font-size: 11.500px; color: #333; }
.tooltip b { display: block; font-weight: bold; }
.tooltip p { margin: 9px 0 0 6px; white-space: nowrap; font-size: 11px; }

/* run ribbon */
.g3-views { width: 58px; } .g3-zoom { width: 52px; } .g3-nav { width: 371px; } .g3-print { width: 140px; }
.g3-export { width: 56px; } .g3-opt { width: 119px; } .g3-find { width: 116px; }
.ic-design { width: 31px; height: 31px; }
.g3-zoom .bigbtn { padding-left: 6px; font-size: 11px; }
.ic-nav { width: 24px; height: 26px; margin-bottom: 3px; }
.ic-nav30 { width: 30px; height: 29px; }
.bigbtn.w56 { flex: none; width: 56px; } .bigbtn.w44 { flex: none; width: 44px; } .bigbtn.w40 { flex: none; width: 40px; } .bigbtn.w45 { flex: none; width: 45px; } .bigbtn.w46 { flex: none; width: 46px; }
.prt { padding-left: 6px; }
.nav .bigbtn { padding-top: 10px; white-space: nowrap; }
.pageno { width: 54px; flex: none; padding: 9px 0 0 3px; display: flex; flex-direction: column; color: #333; font-size: 12px; }
.pg-in { width: 50px; height: 21px; border: 1px solid #666; background: #fff; padding-left: 3px; line-height: 18px; }
.pg-of { margin: 5px 0 0 6px; }
.navside { margin-left: 7px; padding-top: 6px; display: flex; flex-direction: column; gap: 10px; }
.sm { display: flex; align-items: center; gap: 5px; height: 16px; font-size: 11.500px; color: #777; white-space: nowrap; }
.sm.dim { color: #888; }
.opts { flex-direction: column; padding: 6px 0 0 11px; gap: 10px; color: #777; }
.sm.on { background: #e9e9e9; height: 22px; width: 85px; margin-left: -3px; padding-left: 3px; }
.findb { padding: 15px 0 0 11px; gap: 3px; }
.find-in { width: 80px; height: 21px; border: 1px solid #777; background: #fff; }
.findb .ic15 { margin-top: 3px; }
.thinbar { height: 2px; background: #555; flex: none; }
.parambar { height: 46px; background: #efefef; display: flex; align-items: flex-start; padding: 6px 0 0 10px; flex: none; color: #222; font-size: 11px; }
.p-label { width: 128px; line-height: 20px; white-space: nowrap; }
.p-select { width: 170px; height: 20px; background: #e1e1e1; border: 1px solid #aaa; display: flex; align-items: center; justify-content: space-between; padding-left: 3px; }
.pgrip { height: 8px; background: #e2e2e2; display: flex; justify-content: center; flex: none; padding-top: 1px; }
.grip { width: 35px; height: 6px; background: #a8a8a8; margin-left: 306px; }
.report { flex: 1; background: #fff; padding: 60px 0 0 36px; color: #444; }
.rgrid { display: grid; grid-template-columns: 127px 64px 63px 63px 63px 56px 113px; grid-template-rows: 32px 33px repeat(8, 62.600px); width: 549px; font-size: 9.500px; }
.r-box { border: 1px solid #ccc; }
.r-h1 { grid-column: span 2; padding: 3px 0 0 1px; border-bottom: 1px solid #ccc; color: #333; }
.r-h1.nb { border: 0; margin-left: -1px; }
.r-h2 { border-bottom: 1px solid #ccc; text-align: right; font-weight: bold; padding: 3px 3px 0 0; color: #666; font-size: 10px; white-space: nowrap; }
.r-h2.left { text-align: left; padding-left: 3px; }
.r-cat { border-bottom: 1px solid #ccc; padding: 3px 2px; font-size: 10px; line-height: 16px; }
.r-cat a { color: #00f; }
.r-a { padding-top: 4px; display: flex; justify-content: center; }
.r-a .d { width: 19px; height: 24px; }
.r-a .h { width: 24px; height: 19px; margin-top: 6px; }
.r-m { grid-column: 7; text-align: right; padding: 3px 3px 0 0; font-weight: bold; color: #333; font-size: 9.500px; }
.r-date { margin: 43px 0 0 285px; color: #333; font-size: 10px; white-space: nowrap; }
.status { height: 21px; background: #2d2d2d; border-top: 1px solid #666; color: #eee; display: flex; align-items: center; padding-left: 8px; gap: 3px; font-size: 11px; flex: none; }
.srv { width: 13px; height: 16px; }
```
